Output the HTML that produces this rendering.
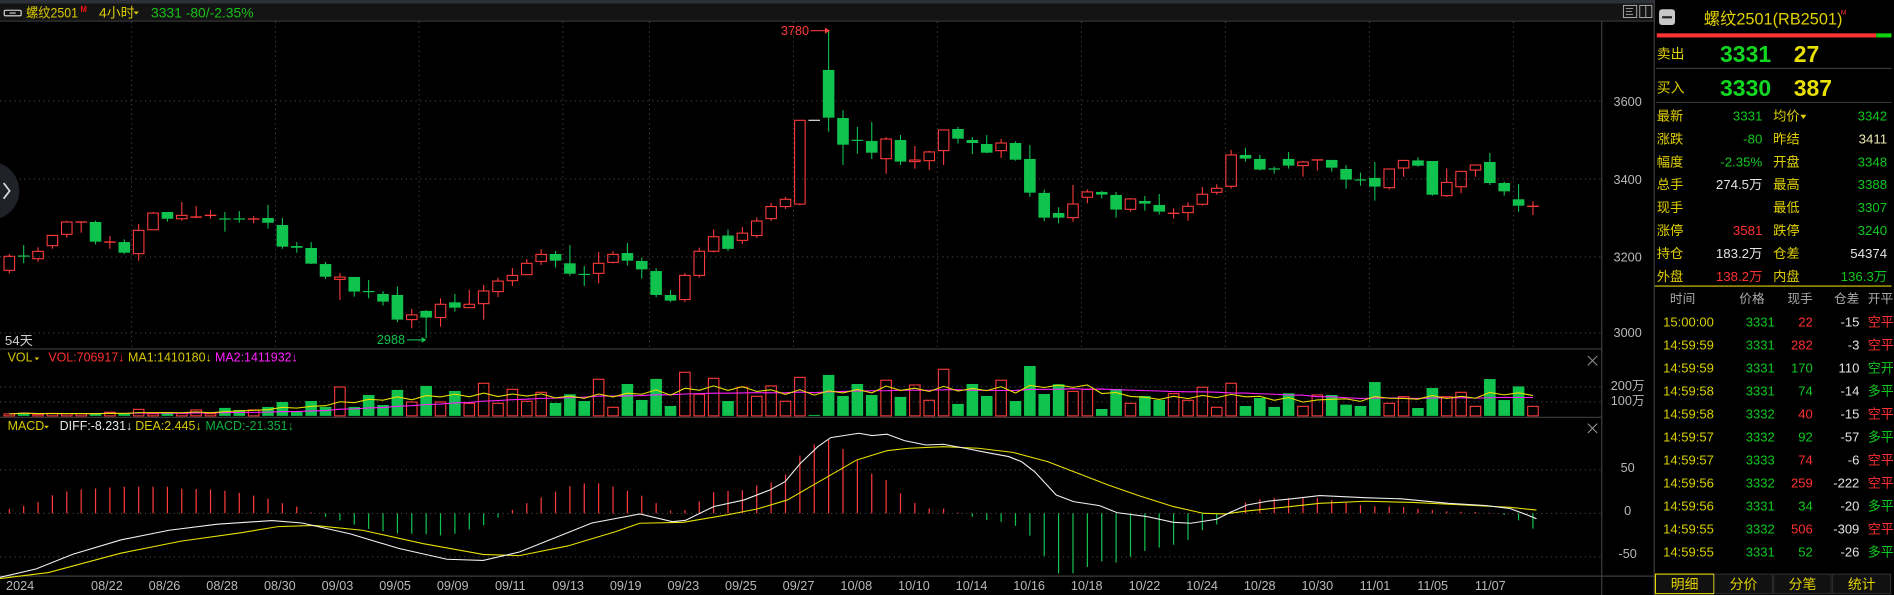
<!DOCTYPE html>
<html><head><meta charset="utf-8">
<style>
html,body{margin:0;padding:0;background:#000;overflow:hidden;}
svg{display:block;font-family:"Liberation Sans","Noto Sans CJK SC",sans-serif;}
</style></head>
<body>
<svg id="s" width="1894" height="595" viewBox="0 0 1568 492.6" preserveAspectRatio="none" xmlns="http://www.w3.org/2000/svg">
<rect x="0" y="0" width="1568" height="492.6" fill="#000"/>
<rect x="0" y="0" width="1370" height="3" fill="#2e3238"/>
<rect x="0" y="3" width="1370" height="14.5" fill="#141414"/>
<line x1="0" y1="17.5" x2="1370" y2="17.5" stroke="#3c3c3c" stroke-width="0.8"/>
<rect x="3.5" y="8.5" width="14" height="4.6" rx="1" fill="none" stroke="#e8e8e8" stroke-width="0.9"/>
<line x1="8" y1="10.8" x2="13" y2="10.8" stroke="#e8e8e8" stroke-width="0.9"/>
<text x="21.5" y="14.6" font-size="11.5" fill="#d8c800" textLength="43" lengthAdjust="spacingAndGlyphs">螺纹2501</text>
<text x="66.5" y="9.8" font-size="6.5" font-weight="bold" fill="#ff1010">M</text>
<text x="82" y="14.6" font-size="11.5" fill="#d8c800">4小时</text>
<path d="M110.5 9.5 L115 9.5 L112.75 12 Z" fill="#d8c800"/>
<text x="125" y="14.6" font-size="11.5" fill="#18c018">3331  -80/-2.35%</text>
<rect x="1344" y="4.5" width="11" height="10" fill="none" stroke="#aaa" stroke-width="0.8"/>
<line x1="1346" y1="7" x2="1352" y2="7" stroke="#aaa" stroke-width="0.7"/>
<line x1="1346" y1="9.5" x2="1351" y2="9.5" stroke="#aaa" stroke-width="0.7"/>
<line x1="1346" y1="12" x2="1352" y2="12" stroke="#aaa" stroke-width="0.7"/>
<rect x="1357.5" y="4.5" width="10" height="10" fill="none" stroke="#aaa" stroke-width="0.8"/>
<line x1="1362.5" y1="4.5" x2="1362.5" y2="14.5" stroke="#aaa" stroke-width="0.8"/>

<g stroke="#4a4a4a" stroke-width="0.8" stroke-dasharray="1 3">
<line x1="0" y1="83.6" x2="1326" y2="83.6"/>
<line x1="0" y1="148.2" x2="1326" y2="148.2"/>
<line x1="0" y1="212.7" x2="1326" y2="212.7"/>
<line x1="0" y1="275.7" x2="1326" y2="275.7"/>
<line x1="0" y1="320.3" x2="1326" y2="320.3"/>
<line x1="0" y1="332.7" x2="1326" y2="332.7"/>
<line x1="0" y1="389" x2="1326" y2="389"/>
<line x1="0" y1="425" x2="1326" y2="425"/>
<line x1="0" y1="461" x2="1326" y2="461"/>
<g id="vg"></g>
</g>
<g stroke="#3e3e3e" stroke-width="1">
<line x1="0" y1="288.9" x2="1326" y2="288.9"/>
<line x1="0" y1="345.5" x2="1326" y2="345.5"/>
<line x1="0" y1="477" x2="1370" y2="477"/>
<line x1="1326" y1="17.5" x2="1326" y2="492.6"/>
<line x1="1369.5" y1="0" x2="1369.5" y2="492.6"/>
</g>
<circle cx="-8" cy="158" r="24" fill="#1f2329"/>
<path d="M3 151.5 L8 158 L3 164.5" fill="none" stroke="#ddd" stroke-width="1.4"/>

<g id="cand"></g>
<g id="vol"></g>
<g id="macd"></g>

<text x="646.5" y="29" font-size="10.5" fill="#ff3b3b">3780</text>
<line x1="671" y1="25.4" x2="684" y2="25.4" stroke="#ff3b3b" stroke-width="0.9"/>
<path d="M683 23 L687 25.4 L683 27.8 Z" fill="#ff3b3b"/>
<text x="312" y="285" font-size="10.5" fill="#10c34f">2988</text>
<line x1="337" y1="281.4" x2="350" y2="281.4" stroke="#10c34f" stroke-width="0.9"/>
<path d="M349 279 L353 281.4 L349 283.8 Z" fill="#10c34f"/>
<text x="4" y="285.5" font-size="11" fill="#d0d0d0">54天</text>

<text x="6.3" y="299.3" font-size="10.3" fill="#d8c800">VOL</text>
<path d="M28.5 296 L32.5 296 L30.5 298.3 Z" fill="#d8c800"/>
<text x="40" y="299.3" font-size="10.3" fill="#ff3030">VOL:706917↓</text>
<text x="106" y="299.3" font-size="10.3" fill="#d8c800">MA1:1410180↓</text>
<text x="178" y="299.3" font-size="10.3" fill="#ff20ff">MA2:1411932↓</text>
<text x="6.3" y="355.8" font-size="10.3" fill="#d8c800">MACD</text>
<path d="M36.5 352.5 L40.5 352.5 L38.5 354.8 Z" fill="#d8c800"/>
<text x="49.4" y="355.8" font-size="10.3" fill="#e8e8e8">DIFF:-8.231↓</text>
<text x="112" y="355.8" font-size="10.3" fill="#d8c800">DEA:2.445↓</text>
<text x="170" y="355.8" font-size="10.3" fill="#10b040">MACD:-21.351↓</text>
<g stroke="#999" stroke-width="0.8">
<line x1="1314.5" y1="294.7" x2="1322.3" y2="302.5"/><line x1="1322.3" y1="294.7" x2="1314.5" y2="302.5"/>
<line x1="1314.5" y1="350.7" x2="1322.3" y2="358.5"/><line x1="1322.3" y1="350.7" x2="1314.5" y2="358.5"/>
</g>

<g font-size="10.5" fill="#b8b8b8" text-anchor="middle">
<text x="1347.5" y="87.6">3600</text>
<text x="1347.5" y="152.2">3400</text>
<text x="1347.5" y="216.7">3200</text>
<text x="1347.5" y="279.2">3000</text>
<text x="1347.5" y="322.8">200万</text>
<text x="1347.5" y="335.2">100万</text>
<text x="1347.5" y="390.9">50</text>
<text x="1347.5" y="426.5">0</text>
<text x="1347.5" y="462.1">-50</text>
</g>
<g id="dates" font-size="10.5" fill="#b8b8b8" text-anchor="middle"></g>

<rect x="1373.5" y="7.7" width="13.2" height="13" rx="2.5" fill="#c8c8c8"/>
<rect x="1376" y="13.4" width="8.2" height="1.8" fill="#222"/>
<text x="1467.9" y="20.5" font-size="13.5" fill="#e0d000" text-anchor="middle">螺纹2501(RB2501)</text>
<text x="1524" y="12" font-size="5.5" fill="#ff3030">M</text>
<rect x="1371.6" y="27.6" width="181.7" height="3.4" fill="#ff3333"/>
<rect x="1553.3" y="27.6" width="12.6" height="3.4" fill="#10d010"/>
<text x="1371.6" y="48.5" font-size="11.5" fill="#e0d000">卖出</text>
<text x="1424" y="51.5" font-size="19" font-weight="bold" fill="#10d820">3331</text>
<text x="1485" y="51.5" font-size="19" font-weight="bold" fill="#e8e000">27</text>
<line x1="1371" y1="56.6" x2="1566" y2="56.6" stroke="#444" stroke-width="0.8"/>
<text x="1371.6" y="76.5" font-size="11.5" fill="#e0d000">买入</text>
<text x="1424" y="79.5" font-size="19" font-weight="bold" fill="#10d820">3330</text>
<text x="1485" y="79.5" font-size="19" font-weight="bold" fill="#e8e000">387</text>
<line x1="1371" y1="84.7" x2="1566" y2="84.7" stroke="#444" stroke-width="0.8"/>

<g font-size="11" fill="#e0d000">
<text x="1371.6" y="99.8">最新</text><text x="1371.6" y="118.8">涨跌</text><text x="1371.6" y="137.9">幅度</text><text x="1371.6" y="156.6">总手</text>
<text x="1371.6" y="175.7">现手</text><text x="1371.6" y="194.4">涨停</text><text x="1371.6" y="213.8">持仓</text><text x="1371.6" y="232.8">外盘</text>
<text x="1467.9" y="99.8">均价</text><text x="1467.9" y="118.8">昨结</text><text x="1467.9" y="137.9">开盘</text><text x="1467.9" y="156.6">最高</text>
<text x="1467.9" y="175.7">最低</text><text x="1467.9" y="194.4">跌停</text><text x="1467.9" y="213.8">仓差</text><text x="1467.9" y="232.8">内盘</text>
</g>
<path d="M1490.5 95 L1495.5 95 L1493 98.5 Z" fill="#e0d000"/>
<g font-size="11" text-anchor="end">
<text x="1459" y="99.8" fill="#10c820">3331</text>
<text x="1459" y="118.8" fill="#10c820">-80</text>
<text x="1459" y="137.9" fill="#10c820">-2.35%</text>
<text x="1459" y="156.6" fill="#e4e4e4">274.5万</text>
<text x="1459" y="194.4" fill="#ff3030">3581</text>
<text x="1459" y="213.8" fill="#e4e4e4">183.2万</text>
<text x="1459" y="232.8" fill="#ff3030">138.2万</text>
<text x="1562.3" y="99.8" fill="#10c820">3342</text>
<text x="1562.3" y="118.8" fill="#eaeab0">3411</text>
<text x="1562.3" y="137.9" fill="#10c820">3348</text>
<text x="1562.3" y="156.6" fill="#10c820">3388</text>
<text x="1562.3" y="175.7" fill="#10c820">3307</text>
<text x="1562.3" y="194.4" fill="#10c820">3240</text>
<text x="1562.3" y="213.8" fill="#e4e4e4">54374</text>
<text x="1562.3" y="232.8" fill="#10c820">136.3万</text>
</g>
<line x1="1370" y1="236.8" x2="1566" y2="236.8" stroke="#e0d000" stroke-width="0.9"/>
<g font-size="10.5" fill="#a8a8a8">
<text x="1382.5" y="251">时间</text>
<text x="1460.9" y="251" text-anchor="end">价格</text>
<text x="1500.7" y="251" text-anchor="end">现手</text>
<text x="1539.3" y="251" text-anchor="end">仓差</text>
<text x="1546.3" y="251">开平</text>
</g>
<g id="trades" font-size="10.8"></g>

<rect x="1370.5" y="475.3" width="48.4" height="16.2" fill="#111" stroke="#e8e000" stroke-width="0.9"/>
<rect x="1419.5" y="475.3" width="47.8" height="16.2" fill="#111" stroke="#333" stroke-width="0.8"/>
<rect x="1468.5" y="475.3" width="47.5" height="16.2" fill="#111" stroke="#333" stroke-width="0.8"/>
<rect x="1517.2" y="475.3" width="48.1" height="16.2" fill="#111" stroke="#333" stroke-width="0.8"/>
<g font-size="11.5" fill="#e0d000" text-anchor="middle">
<text x="1394.7" y="487.6">明细</text><text x="1443.4" y="487.6">分价</text><text x="1492.3" y="487.6">分笔</text><text x="1541.3" y="487.6">统计</text>
</g>
</svg>
<script>
(function(){
var NS="http://www.w3.org/2000/svg";
function el(p,t,a,txt){var e=document.createElementNS(NS,t);for(var k in a)e.setAttribute(k,a[k]);if(txt!==undefined)e.textContent=txt;p.appendChild(e);return e;}
var R="#ff3b3b",G="#10c34f";
var C=[
[212.2,223.8,210.3,226.3,'r'],[212,213.1,202.9,218,'g'],[208.1,214.2,204.8,216.7,'r'],[194.9,203.4,194.9,205.9,'r'],
[183.8,194,182.7,196.8,'r'],[183.8,184.9,183.8,192.6,'r'],[183.8,200.1,182.7,202.3,'g'],[200.4,200.9,195.4,205.9,'r'],
[200.4,209.2,198.2,210.3,'g'],[190.7,210,185.5,215.8,'r'],[176.4,190.2,175.5,190.2,'r'],[175.5,181.1,175.5,183.5,'g'],
[178.3,181.1,167.3,182.7,'r'],[179.7,180.2,170.6,180.5,'r'],[178.3,179.4,173.9,181.1,'r'],[181.3,181.9,175.5,191.8,'g'],
[181.3,182.2,174.7,184.4,'g'],[181.3,181.9,178.9,184.9,'r'],[180.5,184.4,169.7,189.3,'g'],[186.3,204.2,180.5,205.9,'g'],
[203.7,205.1,200.4,209.2,'g'],[205.3,218.3,200.4,218.6,'g'],[218.6,229.1,216.9,231,'g'],[229.4,231.3,226,248.3,'r'],
[229.3,241.4,229.3,245.6,'g'],[241.4,242,231.8,247,'g'],[243.4,249.7,241,253,'g'],[244.2,264.6,237.3,266.8,'g'],
[260.7,264.6,255.8,271.8,'r'],[257.4,262.9,256.6,280.1,'g'],[251.9,262.9,247,270.4,'r'],[250.3,254.7,243.4,258,'g'],
[251.9,254.7,240,254.7,'r'],[240.9,251.4,235.9,264.6,'r'],[232.7,241.4,230,246,'r'],[228,232.4,221.9,236.8,'r'],
[218,227.4,214.5,227.7,'r'],[210.6,216.4,206.2,219.4,'r'],[210.3,215.8,207.8,221.4,'g'],[218,226.6,202.9,228.3,'g'],
[227.2,228.3,220.2,236.8,'g'],[218,226.3,208.7,234.6,'r'],[210.6,217.2,208,218,'r'],[209.5,215.8,201.2,219.7,'g'],
[216.1,223,213.3,230.7,'g'],[224.4,244.2,222,246,'g'],[244.2,248.9,240,250,'g'],[228,248,226,250,'r'],
[208,228,205,230,'r'],[196,208,190,209,'r'],[195,206,190,208,'g'],[193,199,188,202,'r'],
[183,195,180,197,'r'],[171,181,168,183,'r'],[165,171,163,173,'r'],[99.6,169,99.6,170,'r'],
[99.6,100.2,99.6,100.2,'w'],[57.9,97.4,24.8,109,'g'],[97.7,119.8,91.3,136.6,'g'],[116.2,116.8,105.1,127.2,'g'],
[116.7,126.4,101,131.6,'g'],[115.1,131.4,113.4,143.8,'r'],[115.9,133.8,111.8,136.6,'g'],[132.5,133.8,120.9,139.6,'r'],
[125.8,133,124.7,140.7,'r'],[107.6,124.7,107.6,136.6,'r'],[106.8,114.8,105.1,118.9,'g'],[115.9,118.4,113.4,127.5,'g'],
[119.2,126.4,111.8,127,'g'],[118.4,124.7,115.1,130.8,'r'],[118.4,132.2,117,133,'g'],[131.6,159.5,120,163,'g'],
[159.7,180.2,157,183,'g'],[176.3,180.2,171.6,184.9,'g'],[168.9,180.2,153.1,183.5,'r'],[158.9,163.3,156.7,168.3,'r'],
[158.9,161.1,158.1,164.4,'g'],[161.4,173.5,158.9,180.2,'g'],[164.7,173.3,163.9,175.2,'r'],[166.4,168.6,162.2,174.4,'g'],
[169.7,175.2,160.6,177.7,'g'],[176.6,177.7,172.4,181,'r'],[170.8,176,167.5,182.7,'r'],[160.8,169.1,154.8,170.2,'r'],
[155.9,159.2,152.6,161.1,'r'],[128.3,154.2,124.1,156.2,'r'],[128.3,131.3,122.5,133.8,'g'],[131.6,140.4,128.3,141,'g'],
[139.9,140.5,137.9,143.7,'g'],[131.6,137.1,125.8,139.6,'g'],[134.1,137.1,133.3,146.2,'r'],[132.4,133,132.4,141.2,'r'],
[132.4,138.8,132.4,142.1,'g'],[139.9,148.7,136.8,156.2,'g'],[149,149.6,142.9,153.7,'g'],[147.3,154.5,134.1,166.1,'g'],
[139.9,155.4,139.9,157,'r'],[132.8,139.1,132.8,146.3,'r'],[132.8,137.2,130.3,138,'g'],[133.3,161.2,133.3,162,'g'],
[151,162,139.4,163,'r'],[141.9,154.6,141.9,160,'r'],[136.6,140.8,136.6,146.3,'r'],[134.1,151.5,126.7,153.2,'g'],
[151.5,158.4,150.4,162,'g'],[165,170.3,152.4,175.3,'g'],[170.8,171.2,166.7,178,'r']];
var V=[342.7,341.6,343,342.2,342.5,342.5,342.5,341.3,342.7,338.9,342.5,342.2,342.2,339.4,342.5,337.7,339.4,339.4,336.9,332.8,341,332,336.9,320.4,336.9,327,335.3,322.8,332.8,319.5,332.8,323.7,333.9,317.3,333.9,322.3,332.2,324.8,333.6,326.4,332,314,337.2,317.9,331.1,
313.7,336.1,308.2,326.4,313.2,332,320.6,328.1,319.5,332.2,312.4,343.5,310.4,327.8,317.9,327,314.8,328.6,318.7,331.4,305.7,334.4,317.9,327.8,314.8,332,303,326.2,318.1,324,322.3,338.6,322,333.9,327.8,331.1,325.9,331.4,320.6,337.2,317.3,336.1,329.5,336.9,325.6,336.4,327,
327,335,336.1,316.3,333.9,328.4,337.8,321.2,328.4,324.8,336.4,313.8,331.2,319.9,336.4];
var S=11.9,X0=7.7,W=9.6,VB=344.3;
var cg=document.getElementById('cand'),vg=document.getElementById('vol'),mg=document.getElementById('macd');
var vx=[109,228,347,466,537.7,656.9,776,895.3,1014.5,1133.7,1252.9],gg=document.getElementById('vg');
vx.forEach(function(x){el(gg,'line',{x1:x,y1:18,x2:x,y2:288});});
for(var i=0;i<C.length;i++){
 var c=C[i],x=X0+S*i,t=c[0],b=c[1],col=c[4]=='r'?R:(c[4]=='g'?G:'#e0e0e0');
 if(c[4]=='g'){
  el(cg,'line',{x1:x,y1:c[2],x2:x,y2:c[3],stroke:col,'stroke-width':0.9});
  if(b-t<1.3)el(cg,'line',{x1:x-W/2,y1:t,x2:x+W/2,y2:t,stroke:col,'stroke-width':1});
  else el(cg,'rect',{x:x-W/2,y:t,width:W,height:b-t,fill:col});
 }else if(c[4]=='w'){
  el(cg,'line',{x1:x-W/2,y1:t,x2:x+W/2,y2:t,stroke:col,'stroke-width':1});
 }else{
  if(b-t<1.3){
   el(cg,'line',{x1:x,y1:c[2],x2:x,y2:c[3],stroke:col,'stroke-width':0.9});
   el(cg,'line',{x1:x-W/2,y1:t,x2:x+W/2,y2:t,stroke:col,'stroke-width':1.1});
  }else{
   if(c[2]<t)el(cg,'line',{x1:x,y1:c[2],x2:x,y2:t,stroke:col,'stroke-width':0.9});
   if(c[3]>b)el(cg,'line',{x1:x,y1:b,x2:x,y2:c[3],stroke:col,'stroke-width':0.9});
   el(cg,'rect',{x:x-W/2+0.45,y:t,width:W-0.9,height:b-t,fill:'none',stroke:col,'stroke-width':0.9});
  }
 }
 var vy=V[i];
 if(c[4]=='r')el(vg,'rect',{x:x-W/2+0.45,y:vy,width:W-0.9,height:VB-vy,fill:'none',stroke:R,'stroke-width':0.9});
 else el(vg,'rect',{x:x-W/2,y:vy,width:W,height:Math.max(VB-vy,0.8),fill:G});
}
function ma(n){var pts=[];for(var i=0;i<V.length;i++){var s=0,k=0;for(var j=Math.max(0,i-n+1);j<=i;j++){s+=VB-V[j];k++;}pts.push((X0+S*i).toFixed(1)+','+(VB-s/k).toFixed(1));}return pts.join(' ');}
el(vg,'polyline',{points:ma(20),fill:'none',stroke:'#ff20ff','stroke-width':0.9});
el(vg,'polyline',{points:ma(5),fill:'none',stroke:'#e8e000','stroke-width':0.9});
var D=[[0,478],[30,471],[60,459],[100,447],[140,439],[180,434],[225,431],[250,433],[290,442],[330,454],[370,463],[400,464],[430,457],[460,445],[490,433],[529.8,425.5],[556.7,431.9],[567.5,430.8],[590.8,419.4],[616,413.9],[637.5,405.6],[650,398.7],[662.6,383.6],[677,369.8],[687.8,362.3],[711,358.7],[722,360.6],[734.4,359.5],[748.8,364.8],[766.7,368.4],[781,367.8],[799,371.1],[817,374.7],[835,378],[845.7,382.2],[856.5,390.5],[874.4,409.8],[888.8,415.3],[910.3,418.6],[924.7,424.4],[949.8,427.7],[971.4,432.4],[985.7,433.2],[1007.3,429.9],[1018,424.4],[1032.4,418.1],[1050.4,414.8],[1068.3,413.1],[1092.7,410.3],[1130,412],[1160,413],[1199,416.7],[1230,418.5],[1250,421],[1263.5,426],[1272,429.5]];
var E=[[0,479],[40,474],[100,458],[150,448],[200,441],[230,436],[260,435],[300,439],[350,450],[400,459],[430,460],[470,452],[510,440],[529.8,433.2],[565.7,432.4],[601.6,426.3],[626.7,421.4],[651.9,413.9],[673.4,401.5],[687.8,393.2],[709.3,380.8],[734.4,373.1],[752.4,371.1],[781.1,369.8],[809.8,371.1],[838.5,374.5],[867.3,382.2],[888.8,390.5],[917.5,401.5],[942.7,410.3],[971.4,419.4],[996.5,425],[1014.5,425.5],[1032.4,423],[1068.3,419.4],[1092.7,416.7],[1130,415],[1170,416],[1210,418],[1250,420],[1272,422.3]];
function interp(L,x){if(x<=L[0][0])return L[0][1];for(var i=1;i<L.length;i++){if(x<=L[i][0]){var a=L[i-1],b=L[i];return a[1]+(b[1]-a[1])*(x-a[0])/(b[0]-a[0]);}}return L[L.length-1][1];}
for(var i=0;i<C.length;i++){var x=X0+S*i,h=2*(interp(E,x)-interp(D,x));
 if(Math.abs(h)<0.3)continue;
 el(mg,'line',{x1:x,y1:425,x2:x,y2:425-h,stroke:h>0?'#ff3b3b':'#10c34f','stroke-width':1});}
function pl(L){return L.map(function(p){return p[0]+','+p[1];}).join(' ');}
el(mg,'polyline',{points:pl(E),fill:'none',stroke:'#e8e000','stroke-width':0.9});
el(mg,'polyline',{points:pl(D),fill:'none',stroke:'#f0f0f0','stroke-width':0.9});
var dg=document.getElementById('dates');
el(dg,'text',{x:5,y:488.5,'text-anchor':'start'},'2024');
var ds=['08/22','08/26','08/28','08/30','09/03','09/05','09/09','09/11','09/13','09/19','09/23','09/25','09/27','10/08','10/10','10/14','10/16','10/18','10/22','10/24','10/28','10/30','11/01','11/05','11/07'];
for(var k=0;k<ds.length;k++)el(dg,'text',{x:(88.5+47.72*k).toFixed(1),y:488.5},ds[k]);
var tg=document.getElementById('trades');
var T=[['15:00:00','3331','22','r','-15','空平','r'],['14:59:59','3331','282','r','-3','空平','r'],['14:59:59','3331','170','g','110','空开','g'],['14:59:58','3331','74','g','-14','多平','g'],['14:59:58','3332','40','r','-15','空平','r'],['14:59:57','3332','92','g','-57','多平','g'],['14:59:57','3333','74','r','-6','空平','r'],['14:59:56','3332','259','r','-222','空平','r'],['14:59:56','3331','34','g','-20','多平','g'],['14:59:55','3332','506','r','-309','空平','r'],['14:59:55','3331','52','g','-26','多平','g']];
var RC='#ff3030',GC='#10c820';
for(var k=0;k<T.length;k++){var y=(266.3+19.05*k+4).toFixed(1),r=T[k];
 el(tg,'text',{x:1376.9,y:y,fill:'#d8d000'},r[0]);
 el(tg,'text',{x:1469.3,y:y,fill:GC,'text-anchor':'end'},r[1]);
 el(tg,'text',{x:1500.7,y:y,fill:r[3]=='r'?RC:GC,'text-anchor':'end'},r[2]);
 el(tg,'text',{x:1539.3,y:y,fill:'#e4e4e4','text-anchor':'end'},r[4]);
 el(tg,'text',{x:1546.3,y:y,fill:r[6]=='r'?RC:GC},r[5]);}
})();
</script>
</body></html>
